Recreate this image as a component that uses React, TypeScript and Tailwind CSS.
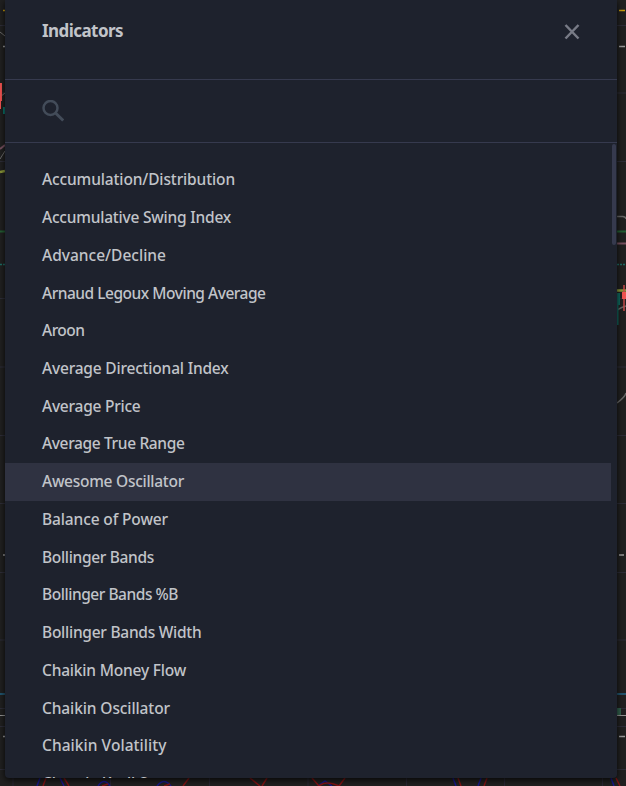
import { useLayoutEffect, useRef } from "react";

type Item = { name: string; width: number };

const items: Item[] = [
  { name: "Accumulation/Distribution", width: 193 },
  { name: "Accumulative Swing Index", width: 189 },
  { name: "Advance/Decline", width: 124 },
  { name: "Arnaud Legoux Moving Average", width: 223.5 },
  { name: "Aroon", width: 42.5 },
  { name: "Average Directional Index", width: 186.5 },
  { name: "Average Price", width: 98.5 },
  { name: "Average True Range", width: 142.5 },
  { name: "Awesome Oscillator", width: 142 },
  { name: "Balance of Power", width: 126 },
  { name: "Bollinger Bands", width: 112 },
  { name: "Bollinger Bands %B", width: 136 },
  { name: "Bollinger Bands Width", width: 159.5 },
  { name: "Chaikin Money Flow", width: 144 },
  { name: "Chaikin Oscillator", width: 128 },
  { name: "Chaikin Volatility", width: 124.5 },
  { name: "Chande Kroll Stop", width: 130 },
];

// Spreads a label's letters so that it fills its given width.
function Label({ name, width }: Item) {
  const ref = useRef<HTMLSpanElement>(null);
  useLayoutEffect(() => {
    const el = ref.current;
    if (!el) return;
    el.style.letterSpacing = "0px";
    const natural = el.getBoundingClientRect().width;
    el.style.letterSpacing = `${(width - natural) / name.length}px`;
  }, [name, width]);
  return (
    <span ref={ref} className="inline-block whitespace-nowrap">
      {name}
    </span>
  );
}

// The dimmed chart that shows round the edges of the dialog.
function Chart() {
  return (
    <svg className="absolute inset-0 h-full w-full" viewBox="0 0 626 786" fill="none">
      <path d="M0 25.5H626M0 93H626M0 161.500H626M0 298.500H626M0 367H626M0 435.500H626M0 503.500H626M0 572.500H626M0 640H626M0 708.500H626M0 726.500H626M0 769.500H626" stroke="#2d2d38" />
      <path d="M13 778V786M110.500 778V786M209.500 778V786M308 778V786M406.500 778V786M504.500 778V786M602.500 778V786" stroke="#292735" />
      <path d="M3 10.500H5M619 10.500H625" stroke="#c79b0e" strokeWidth="1.500" />
      <path d="M3 46.500H5M619 46.500H625M3 555H5M619 555H624M3 736.500H5M619 736.500H625" stroke="#999" strokeWidth="1.500" />
      <path d="M0 32L5 36M0 97L5 93M0 159L5 151" stroke="#6b6b6b" />
      <path d="M0 83H2V101H1V109H0Z" fill="#ef5350" />
      <path d="M3 107H5V114H3Z" fill="#0b756b" />
      <path d="M0 149L5 145M617 243.500H626" stroke="#76505f" strokeWidth="2" />
      <path d="M0 172L5 171M617 290.500H626" stroke="#899638" strokeWidth="2.500" />
      <path d="M0 231.500H5M617 231.500H626" stroke="#235c33" strokeWidth="2" />
      <path d="M0 264.500H5M617 264.500H626" stroke="#1c6b64" strokeWidth="1.500" strokeDasharray="2 1" />
      <path d="M617 216.500H623Q626 217 626 219M617 310Q622 307 626 306M617 403Q625 397 626 393" stroke="#666" strokeWidth="1.500" />
      <path d="M617 293H620V305H618.500V325H617Z" fill="#11675d" />
      <path d="M624 285V311" stroke="#c54a48" strokeWidth="1.500" />
      <path d="M622 292H626V299H622Z" fill="#ef5350" />
      <path d="M0 694H5M617 694H626" stroke="#21546d" strokeWidth="2" />
      <path d="M617 708H621V715H617Z" fill="#315f4c" />
      <path d="M0 715.500H5M617 715.500H626" stroke="#929292" />
      <path d="M40 778L37 786M60 778L64 786M98 786Q104 777 110 786M157 786Q164 777 171 786M318 786L325 781L332 786M453 778L456 786M481 778L478 786M611 778L614 786" stroke="#17178c" strokeWidth="1.500" />
      <path d="M46 778L43 786M64 778L69 786M102 786L108 784M164 786L170 784M189 778L183 786M250 778L260 786M267 778L262 786M312 778L319 786Q326 780 339 786L345 778M458 778L461 786M487 778L484 786M616 778L620 786" stroke="#801414" strokeWidth="1.500" />
    </svg>
  );
}

export default function App() {
  return (
    <div className="relative h-[786px] w-[626px] overflow-hidden bg-[#202020] pl-[5px] font-['Noto_Sans','Open_Sans',sans-serif] text-[#c1c4c9]">
      <Chart />
      <section className="relative flex h-[778px] w-[612px] flex-col overflow-hidden rounded-b bg-[#1e222d] shadow-[0_2px_6px_#000c]">
        <header className="flex h-20 shrink-0 items-start justify-between border-b border-[#363a4e] pl-[37px] pr-[37px]">
          <h1 className="pt-[18px] text-[17px] leading-[26px] font-bold">
            <Label name="Indicators" width={81} />
          </h1>
          <svg className="mt-6 h-4 w-4" viewBox="0 0 16 16" fill="none" stroke="#787b86" strokeWidth="2.500">
            <path d="M1.500 1L14.500 14.500M14.500 1L1.500 14.500" />
          </svg>
        </header>
        <div className="h-[63px] shrink-0 border-b border-[#363a4e] pt-5 pl-[37px]">
          <svg className="h-[22px] w-[22px]" viewBox="0 0 22 22" fill="none" stroke="#434c59" strokeWidth="2.500">
            <circle cx="8.500" cy="8" r="7" />
            <path d="M13.500 13L21.200 20.500" strokeWidth="3" />
          </svg>
        </div>
        <div className="flex min-h-0 flex-1 overflow-hidden">
          <ul className="w-[606px] shrink-0 pt-[18.300px]">
            {items.map((item) => (
              <li
                key={item.name}
                className={`flex h-[37.730px] items-center pb-[1.400px] pl-[37px] text-[15.500px] leading-5 font-medium ${
                  item.name === "Awesome Oscillator" ? "bg-[#2f3241]" : ""
                }`}
              >
                <Label {...item} />
              </li>
            ))}
          </ul>
          <div className="mt-px ml-px h-[101px] w-1 rounded-full bg-[#363a4e]" />
        </div>
      </section>
    </div>
  );
}
